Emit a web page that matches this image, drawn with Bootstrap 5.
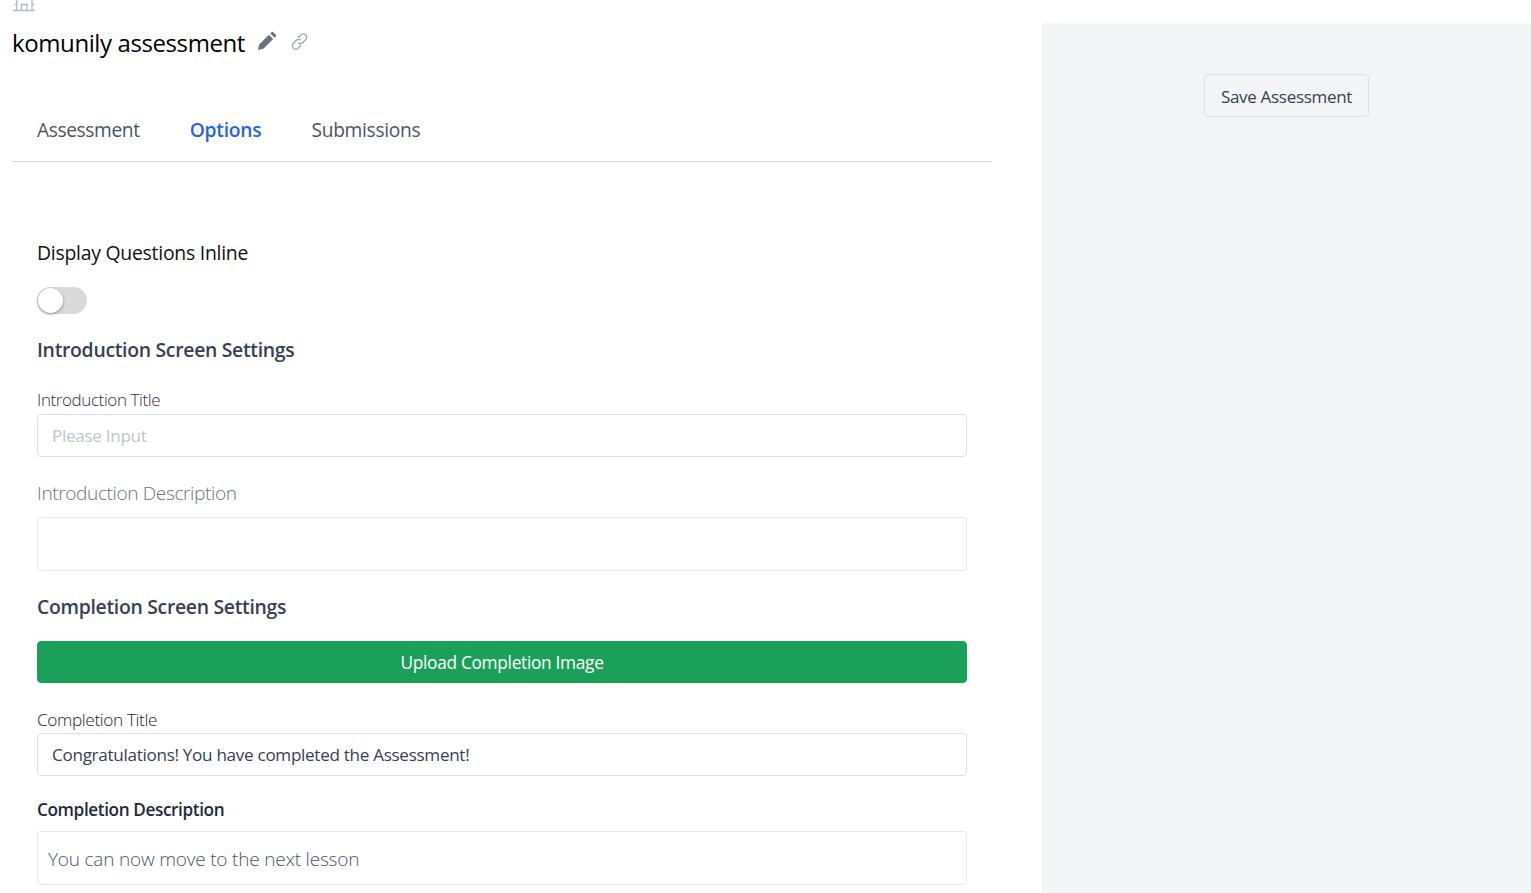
<!DOCTYPE html>
<html lang="en">
<head>
  <meta charset="UTF-8">
  <meta name="viewport" content="width=device-width, initial-scale=1.0">
  <title>komunily assessment</title>
  <link href="https://cdn.jsdelivr.net/npm/bootstrap@5.3.5/dist/css/bootstrap.min.css" rel="stylesheet">
  <style>
    html, body { height: 100%; overflow: hidden; }
    body { font-family: "Open Sans", "Noto Sans", sans-serif; background: #fff; color: #212529; }
    .page-wrap { height: 893px; }
    .main-col { width: 1042px; padding: 0 50px 0 12px; flex: none; }
    .side-col { margin-top: 24px; background: #f3f4f6; box-shadow: 0 -2px 3px -1px rgba(0,0,0,.06); padding-top: 50px; }
    .crumb-icon { height: 12px; overflow: hidden; display: flex; align-items: flex-end; }
    .title-row { height: 38px; margin-top: 12px; }
    .title-text { font-size: 24px; color: #000; letter-spacing: -.4px; line-height: 38px; }
    .title-icon { margin-left: 13px; margin-bottom: 4px; flex: none; }
    .title-text + .title-icon { margin-left: 12px; }
    .tab-bar { border-bottom: 1px solid #d1d5db; margin-top: 30px; height: 70px; padding: 6px 25px 0; gap: 50px; }
    .tab-link { font-size: 19.2px; color: #4b5563; line-height: 40px; letter-spacing: -.3px; text-decoration: none; }
    .tab-link.on { color: #2563eb; font-weight: 600; letter-spacing: -.2px; }
    .tab-first { letter-spacing: -.4px; }
    .form-area { padding: 0 25px; }
    .inline-label { margin-top: 76px; font-size: 19.4px; color: #111; line-height: 30px; letter-spacing: -.25px; }
    .toggle-track { width: 50px; height: 27px; border-radius: 14px; background: #d9d9d9; margin-top: 19px; padding: 1px; }
    .toggle-knob { width: 25px; height: 25px; border-radius: 50%; background: #fff; box-shadow: 0 1px 3px rgba(0,0,0,.4); }
    .sect-head { font-size: 19.4px; font-weight: 600; color: #374151; line-height: 30px; letter-spacing: -.3px; }
    .intro-head { margin-top: 21px; }
    .comp-head { margin-top: 21px; margin-bottom: 19px; }
    .field-label { font-size: 17px; line-height: 24px; letter-spacing: -.4px; font-weight: 300; margin: 0; display: block; }
    .intro-title { margin-top: 23px; margin-bottom: 2px; color: #3b2a4a; }
    .intro-desc { margin-top: 22px; margin-bottom: 10px; font-size: 19.1px; line-height: 28px; color: #6b7280; }
    .comp-title { margin-top: 25px; margin-bottom: 1px; font-size: 17.3px; }
    .comp-desc { margin-top: 22px; margin-bottom: 9px; font-weight: 600; font-size: 17.2px; color: #1f2937; }
    .field-box { height: 43px; border: 1px solid #dcdfe6; border-radius: 4px; font-size: 17.1px; padding: 0 14px; color: #374151; font-weight: 400; letter-spacing: -.3px; box-shadow: none; }
    .field-box::placeholder { color: #c0c4cc; }
    .area-box { height: 54px; border: 1px solid #e5e7eb; border-radius: 4px; padding: 0 10px; font-size: 19px; font-weight: 300; color: #4b5563; line-height: 54px; letter-spacing: -.2px; }
    .upload-btn { height: 42px; background: #1ba05a; border-color: #1ba05a; color: #fff; font-size: 17.3px; letter-spacing: -.3px; border-radius: 4px; padding: 1px 0 0; }
    .save-btn { width: 165px; height: 43px; padding: 2px 0 0; background: #f3f4f6; border: 1px solid #dcdfe6; border-radius: 4px; font-size: 17px; color: #374151; letter-spacing: -.3px; }
  </style>
</head>
<body>

  <div class="page-wrap d-flex">

    <!-- Left column -->
    <div class="main-col">
      <div class="crumb-icon">
        <svg width="24" height="12" viewBox="0 0 24 12" fill="none" stroke="#b4b9c4" stroke-width="1.3"><path d="M1 10.500h22M4.700 10.500V0M20 10.500V0M2.500 4.500h2.200M22.200 4.500H20M9.500 10.500V4.500h5.500v6"/></svg>
      </div>
      <div class="title-row d-flex align-items-center">
        <span class="title-text">komunily assessment</span>
        <svg class="title-icon" width="20" height="20" viewBox="0 0 20 20" fill="#6b7280"><path d="M1 19l1.200-5.400L12 3.800l4.200 4.200L6.400 17.800zM13.300 2.500l1.300-1.300c.5-.5 1.200-.5 1.700 0l2.500 2.500c.5.500.5 1.200 0 1.700l-1.300 1.300z"/></svg>
        <svg class="title-icon" width="19" height="19" viewBox="0 0 20 20" fill="none" stroke="#9ca3af" stroke-width="1.400"><path d="M8.500 6l3-3a3.400 3.400 0 0 1 5 5l-3 3a3.400 3.400 0 0 1-4.700.2M11.500 14l-3 3a3.400 3.400 0 0 1-5-5l3-3a3.400 3.400 0 0 1 4.700-.2"/></svg>
      </div>

      <div class="tab-bar d-flex align-items-center">
        <a class="tab-link tab-first" href="#">Assessment</a>
        <a class="tab-link on" href="#">Options</a>
        <a class="tab-link" href="#">Submissions</a>
      </div>

      <form class="form-area">
        <div class="inline-label">Display Questions Inline</div>
        <div class="toggle-track"><div class="toggle-knob"></div></div>

        <div class="sect-head intro-head">Introduction Screen Settings</div>
        <label class="field-label intro-title">Introduction Title</label>
        <input type="text" class="form-control field-box" placeholder="Please Input">
        <label class="field-label intro-desc">Introduction Description</label>
        <div class="area-box"></div>

        <div class="sect-head comp-head">Completion Screen Settings</div>
        <button type="button" class="btn w-100 upload-btn">Upload Completion Image</button>
        <label class="field-label comp-title">Completion Title</label>
        <input type="text" class="form-control field-box" value="Congratulations! You have completed the Assessment!">
        <label class="field-label comp-desc">Completion Description</label>
        <div class="area-box">You can now move to the next lesson</div>
      </form>
    </div>

    <!-- Right column -->
    <div class="side-col flex-grow-1 d-flex justify-content-center align-items-start">
      <button type="button" class="btn save-btn">Save Assessment</button>
    </div>
  </div>

</body>
</html>
